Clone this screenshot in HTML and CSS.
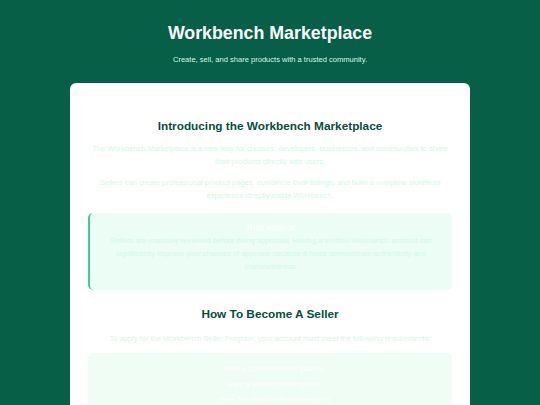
FILE: index.html
```html
<!DOCTYPE html>
<html lang="en">
<head>
<meta charset="utf-8">
<title>Workbench Marketplace</title>
<link rel="stylesheet" href="styles.css">
</head>
<body>
<header class="hero">
  <h1 class="hero-title">Workbench Marketplace</h1>
  <p class="hero-sub">Create, sell, and share products with a trusted community.</p>
</header>
<main class="card">
  <h2 class="section-title">Introducing the Workbench Marketplace</h2>
  <p class="text">The Workbench Marketplace is a new way for creators, developers, businesses, and communities to share their products directly with users.</p>
  <p class="text">Sellers can create professional product pages, customize their listings, and build a complete storefront experience directly inside Workbench.</p>
  <div class="callout">
    <div class="callout-title">Trust matters:</div>
    <p class="callout-text">Sellers are manually reviewed before being approved. Having a verified Workbench account can significantly improve your chances of approval because it helps demonstrate authenticity and trustworthiness.</p>
  </div>
  <h2 class="section-title second">How To Become A Seller</h2>
  <p class="text intro">To apply for the Workbench Seller Program, your account must meet the following requirements:</p>
  <ul class="reqs">
    <li class="req"><span class="check">✓</span><span class="req-text">Have a confirmed email address</span></li>
    <li class="req"><span class="check">✓</span><span class="req-text">Have a verified phone number</span></li>
    <li class="req"><span class="check">✓</span><span class="req-text">Have Two-Step-Verification enabled</span></li>
  </ul>
</main>
</body>
</html>
```

FILE: styles.css
```css
html, body {
  margin: 0;
  padding: 0;
}
body {
  background: #065f46;
  font-family: "Liberation Sans", Arial, sans-serif;
  color: #d1fae5;
}
.hero {
  padding-top: 23px;
  text-align: center;
}
.hero-title {
  margin: 0;
  font-size: 17.8px;
  line-height: 20px;
  font-weight: 700;
  color: #ffffff;
}
.hero-sub {
  margin: 12px 0 0;
  font-size: 7.56px;
  line-height: 9px;
  color: #d1fae5;
}
.card {
  width: 364px;
  margin: 19px auto 0;
  padding: 36px 18px 40px;
  background: #ffffff;
  border-radius: 6px;
  text-align: center;
}
.section-title {
  margin: 0;
  font-size: 11.8px;
  line-height: 15px;
  font-weight: 700;
  color: #064e3b;
}
.section-title.second {
  margin-top: 17px;
}
.text {
  margin: 8px 0 0;
  font-size: 7.56px;
  line-height: 13px;
  color: #d1fae5;
}
.text.intro {
  margin-top: 10px;
}
.callout {
  margin-top: 10.5px;
  padding: 9px 16px 17px;
  background: #ecfdf5;
  border-left: 2px solid #34d399;
  border-radius: 5px;
}
.callout-title {
  font-size: 7.56px;
  line-height: 12px;
  font-weight: 700;
  color: #ffffff;
}
.callout-text {
  margin: 0;
  font-size: 7.56px;
  line-height: 13px;
  color: #d1fae5;
}
.reqs {
  list-style: none;
  margin: 8.5px 0 0;
  padding: 8px 12px;
  background: #f0fdf4;
  border-radius: 5px;
  display: flex;
  flex-direction: column;
}
.req {
  display: flex;
  align-items: center;
  height: 15.5px;
  font-size: 7px;
  color: #ffffff;
}
.check {
  width: 8px;
  font-size: 6px;
  text-align: left;
}
.req-text {
  flex: 1;
  text-align: center;
}
```
